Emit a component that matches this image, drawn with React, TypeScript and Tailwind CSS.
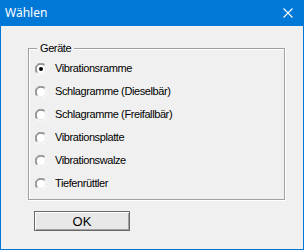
import React from "react";

const geraete = [
    "Vibrationsramme",
    "Schlagramme (Dieselbär)",
    "Schlagramme (Freifallbär)",
    "Vibrationsplatte",
    "Vibrationswalze",
    "Tiefenrüttler",
];

function Radio({ checked }: { checked: boolean }) {
    return (
        <svg width="12" height="12" viewBox="0 0 12 12" className="shrink-0">
            <circle cx="6" cy="6" r="5.5" fill="#ffffff" />
            <path d="M1.8 10.2 A5.5 5.5 0 0 1 10.2 1.8" fill="none" stroke="#a0a0a0" strokeWidth="1" />
            <path d="M10.2 1.8 A5.5 5.5 0 0 1 1.8 10.2" fill="none" stroke="#ffffff" strokeWidth="1" />
            <path d="M2.5 9.5 A4.5 4.5 0 0 1 9.5 2.5" fill="none" stroke="#696969" strokeWidth="1" />
            <path d="M9.5 2.5 A4.5 4.5 0 0 1 2.5 9.5" fill="none" stroke="#e3e3e3" strokeWidth="1" />
            {checked && <circle cx="6" cy="6" r="2" fill="#000000" />}
        </svg>
    );
}

export default function App() {
    const [selected, setSelected] = React.useState(0);

    return (
        <div className="w-[304px] h-[250px] flex flex-col bg-[#0078d7] px-px pb-px font-['Liberation_Sans',Arial,sans-serif] text-black">
            {/* Title bar */}
            <div className="h-[26px] flex items-center justify-between pl-[4px] pr-[10px] shrink-0">
                <span className="text-white text-[12px] font-['Noto_Sans',sans-serif]">Wählen</span>
                <svg width="10" height="10" viewBox="0 0 10 10">
                    <path d="M0.5 0.5 L9.5 9.5 M9.5 0.5 L0.5 9.5" stroke="#ffffff" strokeWidth="1.1" />
                </svg>
            </div>

            {/* Body */}
            <div className="flex-1 bg-[#f0f0f0] pt-[22px] pl-[27px] pr-[18px]">
                <div className="relative border border-[#a0a0a0] shadow-[inset_1px_1px_0_#ffffff,1px_1px_0_#ffffff] pt-[8px] pb-[3px] pl-[6px] h-[152px]">
                    <span className="absolute -top-[8px] left-[8px] bg-[#f0f0f0] px-[3px] text-[11px] leading-[14px] tracking-[-0.4px]">
                        Geräte
                    </span>
                    {geraete.map((name, index) => (
                        <div
                            key={index}
                            className="h-[23px] flex items-center gap-[8px] cursor-default"
                            onClick={() => setSelected(index)}
                        >
                            <Radio checked={selected === index} />
                            <span className="text-[11px] tracking-[-0.4px]">{name}</span>
                        </div>
                    ))}
                </div>

                <button className="mt-[11px] ml-[6px] w-[96px] h-[20px] border border-[#696969] bg-[#e8e8e8] shadow-[inset_1px_1px_0_#ffffff,inset_-1px_-1px_0_#a0a0a0] text-[13px] leading-none flex items-center justify-center">
                    OK
                </button>
            </div>
        </div>
    );
}
